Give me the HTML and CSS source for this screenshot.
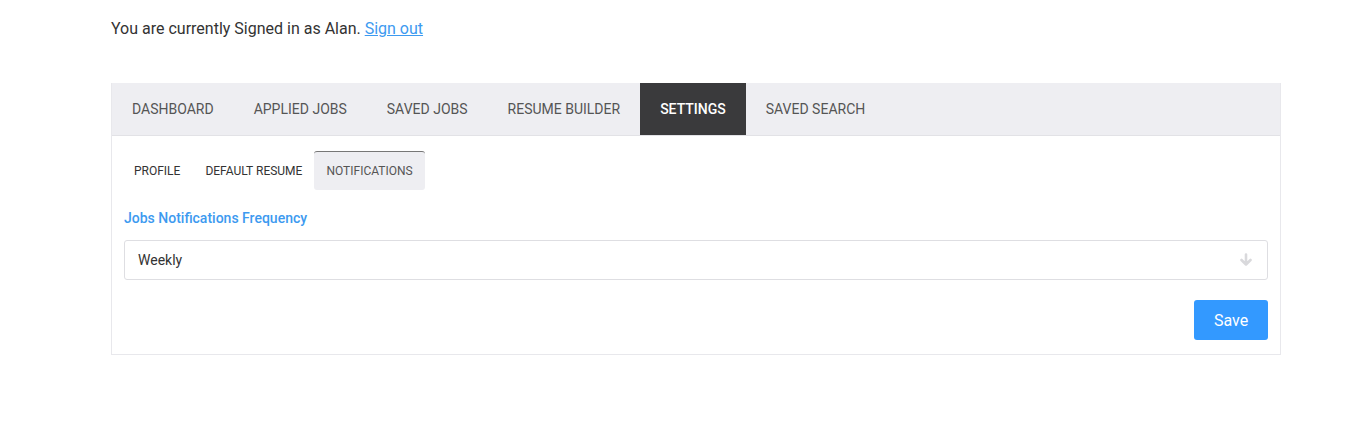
FILE: index.html
```html
<!DOCTYPE html>
<html lang="en">
<head>
<meta charset="utf-8">
<title>Settings</title>
<link rel="stylesheet" href="styles.css">
</head>
<body>
<div class="page">
  <p class="signin">You are currently Signed in as Alan. <a href="#" class="signout">Sign out</a></p>
  <div class="panel">
    <nav class="main-tabs">
      <a href="#" class="tab">Dashboard</a>
      <a href="#" class="tab">Applied Jobs</a>
      <a href="#" class="tab">Saved Jobs</a>
      <a href="#" class="tab">Resume Builder</a>
      <a href="#" class="tab active">Settings</a>
      <a href="#" class="tab">Saved Search</a>
    </nav>
    <div class="panel-body">
      <nav class="sub-tabs">
        <a href="#" class="sub-tab">Profile</a>
        <a href="#" class="sub-tab">Default Resume</a>
        <a href="#" class="sub-tab active">Notifications</a>
      </nav>
      <label class="field-label">Jobs Notifications Frequency</label>
      <div class="select">
        <span>Weekly</span>
        <svg class="arrow" width="14" height="14" viewBox="0 0 14 14"><path d="M7 1.5V11.5M2.5 7L7 11.5L11.5 7" fill="none" stroke="#d9d9dc" stroke-width="2.6" stroke-linecap="round" stroke-linejoin="round"/></svg>
      </div>
      <div class="actions">
        <button class="save">Save</button>
      </div>
    </div>
  </div>
</div>
</body>
</html>
```

FILE: styles.css
```css
* { box-sizing: border-box; }
body {
  margin: 0;
  font-family: Roboto, "Liberation Sans", sans-serif;
  color: #333;
  background: #fff;
}
.page {
  width: 1170px;
  margin-left: 111px;
  padding-top: 19px;
}
.signin {
  margin: 0;
  font-size: 16px;
  line-height: 20px;
  color: #333;
}
.signout {
  color: #3d9af0;
  text-decoration: underline;
}
.panel {
  margin-top: 44px;
  border: 1px solid #e8e8ec;
  border-top: none;
}
.main-tabs {
  display: flex;
  background: #eeeef2;
  border-bottom: 1px solid #e2e2e6;
  height: 53px;
}
.tab {
  display: flex;
  align-items: center;
  padding: 0 20px;
  font-size: 14px;
  text-transform: uppercase;
  color: #555;
  text-decoration: none;
}
.tab.active {
  background: #3a3a3c;
  color: #fff;
  font-weight: 500;
}
.panel-body {
  padding: 15px 12px 14px;
}
.sub-tabs {
  display: flex;
  height: 39px;
}
.sub-tab {
  display: flex;
  align-items: center;
  padding: 0 12px;
  font-size: 12px;
  text-transform: uppercase;
  color: #333;
  text-decoration: none;
}
.sub-tab:first-child { padding: 0 13px 0 10px; }
.sub-tab.active {
  background: #eeeef2;
  border-top: 1px solid #777;
  border-radius: 3px;
  padding: 0 12px;
  color: #555;
}
.field-label {
  display: block;
  margin-top: 20px;
  font-size: 14px;
  font-weight: 500;
  color: #3d9af0;
  line-height: 17px;
}
.select {
  display: flex;
  align-items: center;
  justify-content: space-between;
  margin-top: 13px;
  height: 40px;
  border: 1px solid #dedee2;
  border-radius: 3px;
  padding: 0 14px 0 13px;
  font-size: 14px;
  color: #333;
}
.actions {
  display: flex;
  justify-content: flex-end;
  margin-top: 20px;
}
.save {
  width: 74px;
  height: 40px;
  background: #3399ff;
  color: #fff;
  border: none;
  border-radius: 3px;
  font-family: Roboto, "Liberation Sans", sans-serif;
  font-size: 16px;
}
```
